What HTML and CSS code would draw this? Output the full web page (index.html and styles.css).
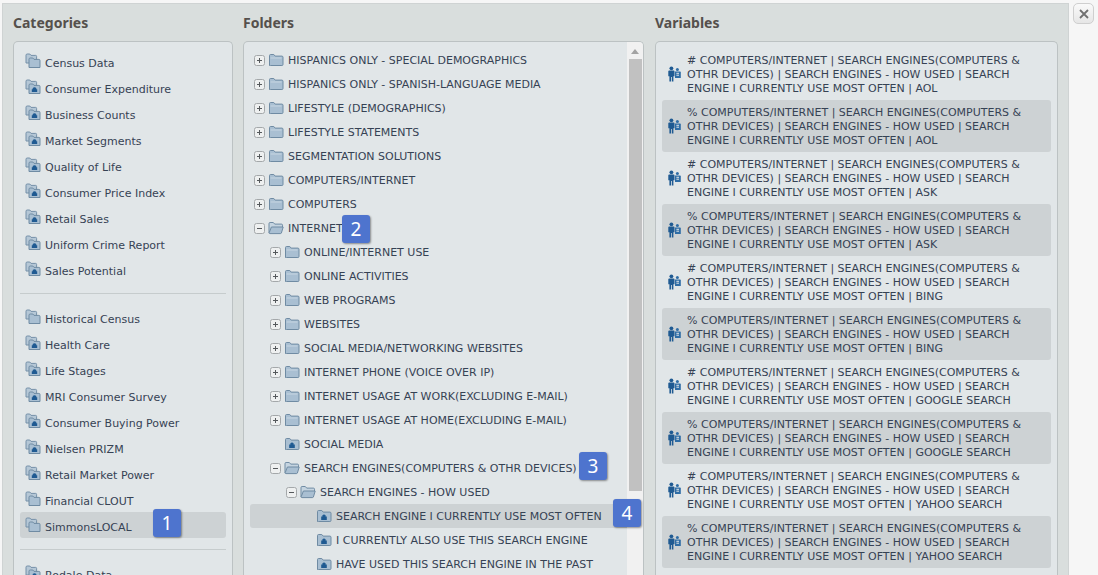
FILE: index.html
```html
<!DOCTYPE html>
<html lang="en">
<head>
<meta charset="utf-8">
<title>Data browser</title>
<link rel="stylesheet" href="styles.css">
</head>
<body>
<svg class="defs" width="0" height="0" aria-hidden="true">
  <defs>
    <symbol id="folder" viewBox="0 0 16 14"><path d="M1.5 12.5V2.6q0-1.1 1.1-1.1h3.2l1.4 1.6h6.7q1.1 0 1.1 1.1v7.3q0 1-1.1 1H2.6q-1.1 0-1.1-1z" fill="#a9bfd2" stroke="#6f8ba3"/><path d="M2.5 5h11" stroke="#c7d6e2"/></symbol>
    <symbol id="folder-open" viewBox="0 0 16 14"><path d="M1 12V2.6q0-1.1 1.1-1.1h3.2l1.4 1.6h6.7q1.1 0 1.1 1.1V6" fill="#c5d4e0" stroke="#6f8ba3"/><path d="M3.4 6h11.8l-1.8 6q-.2.6-1 .6H2q-1 0-.8-.9z" fill="#a9bfd2" stroke="#6f8ba3"/></symbol>
    <symbol id="folder-lock" viewBox="0 0 16 14"><path d="M1.5 12.5V2.6q0-1.1 1.1-1.1h3.2l1.4 1.6h6.7q1.1 0 1.1 1.1v7.3q0 1-1.1 1H2.6q-1.1 0-1.1-1z" fill="#a9bfd2" stroke="#6f8ba3"/><path d="M5.2 11V7.6h1.2V6.3q1.6-1.6 3.2 0v1.3h1.2V11z" fill="#1f5a92"/></symbol>
    <symbol id="stack" viewBox="0 0 16 16"><path d="M1 10V2.2Q1 1 2.2 1h2.6L6 2.4h4.6q1 0 1 1V10z" fill="#b5c7d6" stroke="#7590a8"/><path d="M4 14.5V6.2Q4 5 5.2 5h2.6L9 6.4h4.9q1.1 0 1.1 1.1v7H4z" fill="#a9bfd2" stroke="#6f8ba3"/></symbol>
    <symbol id="stack-lock" viewBox="0 0 16 16"><path d="M1 10V2.2Q1 1 2.2 1h2.6L6 2.4h4.6q1 0 1 1V10z" fill="#b5c7d6" stroke="#7590a8"/><path d="M4 14.5V6.2Q4 5 5.2 5h2.6L9 6.4h4.9q1.1 0 1.1 1.1v7H4z" fill="#a9bfd2" stroke="#6f8ba3"/><path d="M6.8 13v-2.8h.9V9q1.8-1.7 3.6 0v1.2h.9V13z" fill="#1f5a92"/></symbol>
    <symbol id="people" viewBox="0 0 13 16"><circle cx="3.4" cy="2.3" r="1.9" fill="#1f5a92"/><path d="M.3 5.3q0-.9.9-.9h4.4q.9 0 .9.9v5H5.4V15.5H3.8v-4.6h-.8v4.6H1.4V10.3H.3z" fill="#1f5a92"/><circle cx="9.4" cy="3.4" r="1.5" fill="#2f6da6"/><path d="M7 5.6h5q.8 0 .8.8V12H7z" fill="#2f6da6"/><path d="M8.4 7.3h2.6M8.4 9.2h2.6" stroke="#e0e5e8"/></symbol>
    <symbol id="plus" viewBox="0 0 11 11"><rect x=".5" y=".5" width="10" height="10" rx="2" fill="#eef0f0" stroke="#a4a8aa"/><path d="M3 5.5h5M5.5 3v5" stroke="#55595c"/></symbol>
    <symbol id="minus" viewBox="0 0 11 11"><rect x=".5" y=".5" width="10" height="10" rx="2" fill="#eef0f0" stroke="#a4a8aa"/><path d="M3 5.5h5" stroke="#55595c"/></symbol>
  </defs>
</svg>
<div class="stage">
  <main class="dialog">
    <section class="col col-cat">
      <h2>Categories</h2>
      <div class="panel cat-panel">
        <ul class="cats">
          <li><svg class="ic-stack"><use href="#stack"/></svg>Census Data</li>
          <li><svg class="ic-stack"><use href="#stack-lock"/></svg>Consumer Expenditure</li>
          <li><svg class="ic-stack"><use href="#stack-lock"/></svg>Business Counts</li>
          <li><svg class="ic-stack"><use href="#stack-lock"/></svg>Market Segments</li>
          <li><svg class="ic-stack"><use href="#stack-lock"/></svg>Quality of Life</li>
          <li><svg class="ic-stack"><use href="#stack-lock"/></svg>Consumer Price Index</li>
          <li><svg class="ic-stack"><use href="#stack-lock"/></svg>Retail Sales</li>
          <li><svg class="ic-stack"><use href="#stack-lock"/></svg>Uniform Crime Report</li>
          <li><svg class="ic-stack"><use href="#stack-lock"/></svg>Sales Potential</li>
        </ul>
        <hr>
        <ul class="cats">
          <li><svg class="ic-stack"><use href="#stack"/></svg>Historical Census</li>
          <li><svg class="ic-stack"><use href="#stack-lock"/></svg>Health Care</li>
          <li><svg class="ic-stack"><use href="#stack-lock"/></svg>Life Stages</li>
          <li><svg class="ic-stack"><use href="#stack-lock"/></svg>MRI Consumer Survey</li>
          <li><svg class="ic-stack"><use href="#stack-lock"/></svg>Consumer Buying Power</li>
          <li><svg class="ic-stack"><use href="#stack-lock"/></svg>Nielsen PRIZM</li>
          <li><svg class="ic-stack"><use href="#stack-lock"/></svg>Retail Market Power</li>
          <li><svg class="ic-stack"><use href="#stack"/></svg>Financial CLOUT</li>
          <li class="sel"><svg class="ic-stack"><use href="#stack"/></svg>SimmonsLOCAL<span class="badge badge-1">1</span></li>
        </ul>
        <hr>
        <ul class="cats">
          <li><svg class="ic-stack"><use href="#stack-lock"/></svg>Rodale Data</li>
        </ul>
      </div>
    </section>
    <section class="col col-fold">
      <h2>Folders</h2>
      <div class="panel fold-panel">
        <ul class="tree">
          <li><svg class="tog"><use href="#plus"/></svg><svg class="fo"><use href="#folder"/></svg>HISPANICS ONLY - SPECIAL DEMOGRAPHICS</li>
          <li><svg class="tog"><use href="#plus"/></svg><svg class="fo"><use href="#folder"/></svg>HISPANICS ONLY - SPANISH-LANGUAGE MEDIA</li>
          <li><svg class="tog"><use href="#plus"/></svg><svg class="fo"><use href="#folder"/></svg>LIFESTYLE (DEMOGRAPHICS)</li>
          <li><svg class="tog"><use href="#plus"/></svg><svg class="fo"><use href="#folder"/></svg>LIFESTYLE STATEMENTS</li>
          <li><svg class="tog"><use href="#plus"/></svg><svg class="fo"><use href="#folder"/></svg>SEGMENTATION SOLUTIONS</li>
          <li><svg class="tog"><use href="#plus"/></svg><svg class="fo"><use href="#folder"/></svg>COMPUTERS/INTERNET</li>
          <li><svg class="tog"><use href="#plus"/></svg><svg class="fo"><use href="#folder"/></svg>COMPUTERS</li>
          <li><svg class="tog"><use href="#minus"/></svg><svg class="fo"><use href="#folder-open"/></svg>INTERNET<span class="badge badge-2">2</span></li>
          <li class="l1"><svg class="tog"><use href="#plus"/></svg><svg class="fo"><use href="#folder"/></svg>ONLINE/INTERNET USE</li>
          <li class="l1"><svg class="tog"><use href="#plus"/></svg><svg class="fo"><use href="#folder"/></svg>ONLINE ACTIVITIES</li>
          <li class="l1"><svg class="tog"><use href="#plus"/></svg><svg class="fo"><use href="#folder"/></svg>WEB PROGRAMS</li>
          <li class="l1"><svg class="tog"><use href="#plus"/></svg><svg class="fo"><use href="#folder"/></svg>WEBSITES</li>
          <li class="l1"><svg class="tog"><use href="#plus"/></svg><svg class="fo"><use href="#folder"/></svg>SOCIAL MEDIA/NETWORKING WEBSITES</li>
          <li class="l1"><svg class="tog"><use href="#plus"/></svg><svg class="fo"><use href="#folder"/></svg>INTERNET PHONE (VOICE OVER IP)</li>
          <li class="l1"><svg class="tog"><use href="#plus"/></svg><svg class="fo"><use href="#folder"/></svg>INTERNET USAGE AT WORK(EXCLUDING E-MAIL)</li>
          <li class="l1"><svg class="tog"><use href="#plus"/></svg><svg class="fo"><use href="#folder"/></svg>INTERNET USAGE AT HOME(EXCLUDING E-MAIL)</li>
          <li class="l1 leaf"><svg class="fo"><use href="#folder-lock"/></svg>SOCIAL MEDIA</li>
          <li class="l1"><svg class="tog"><use href="#minus"/></svg><svg class="fo"><use href="#folder-open"/></svg>SEARCH ENGINES(COMPUTERS &amp; OTHR DEVICES)<span class="badge badge-3">3</span></li>
          <li class="l2"><svg class="tog"><use href="#minus"/></svg><svg class="fo"><use href="#folder-open"/></svg>SEARCH ENGINES - HOW USED</li>
          <li class="l3 leaf sel"><svg class="fo"><use href="#folder-lock"/></svg>SEARCH ENGINE I CURRENTLY USE MOST OFTEN<span class="badge badge-4">4</span></li>
          <li class="l3 leaf"><svg class="fo"><use href="#folder-lock"/></svg>I CURRENTLY ALSO USE THIS SEARCH ENGINE</li>
          <li class="l3 leaf"><svg class="fo"><use href="#folder-lock"/></svg>HAVE USED THIS SEARCH ENGINE IN THE PAST</li>
        </ul>
        <div class="scrollbar"><span class="arrow"></span><span class="thumb"></span></div>
      </div>
    </section>
    <section class="col col-var">
      <h2>Variables</h2>
      <div class="panel var-panel">
        <ul class="vars">
          <li><svg class="ic-people"><use href="#people"/></svg><p># COMPUTERS/INTERNET | SEARCH ENGINES(COMPUTERS &amp; OTHR DEVICES) | SEARCH ENGINES - HOW USED | SEARCH ENGINE I CURRENTLY USE MOST OFTEN | AOL</p></li>
          <li class="alt"><svg class="ic-people"><use href="#people"/></svg><p>% COMPUTERS/INTERNET | SEARCH ENGINES(COMPUTERS &amp; OTHR DEVICES) | SEARCH ENGINES - HOW USED | SEARCH ENGINE I CURRENTLY USE MOST OFTEN | AOL</p></li>
          <li><svg class="ic-people"><use href="#people"/></svg><p># COMPUTERS/INTERNET | SEARCH ENGINES(COMPUTERS &amp; OTHR DEVICES) | SEARCH ENGINES - HOW USED | SEARCH ENGINE I CURRENTLY USE MOST OFTEN | ASK</p></li>
          <li class="alt"><svg class="ic-people"><use href="#people"/></svg><p>% COMPUTERS/INTERNET | SEARCH ENGINES(COMPUTERS &amp; OTHR DEVICES) | SEARCH ENGINES - HOW USED | SEARCH ENGINE I CURRENTLY USE MOST OFTEN | ASK</p></li>
          <li><svg class="ic-people"><use href="#people"/></svg><p># COMPUTERS/INTERNET | SEARCH ENGINES(COMPUTERS &amp; OTHR DEVICES) | SEARCH ENGINES - HOW USED | SEARCH ENGINE I CURRENTLY USE MOST OFTEN | BING</p></li>
          <li class="alt"><svg class="ic-people"><use href="#people"/></svg><p>% COMPUTERS/INTERNET | SEARCH ENGINES(COMPUTERS &amp; OTHR DEVICES) | SEARCH ENGINES - HOW USED | SEARCH ENGINE I CURRENTLY USE MOST OFTEN | BING</p></li>
          <li><svg class="ic-people"><use href="#people"/></svg><p># COMPUTERS/INTERNET | SEARCH ENGINES(COMPUTERS &amp; OTHR DEVICES) | SEARCH ENGINES - HOW USED | SEARCH ENGINE I CURRENTLY USE MOST OFTEN | GOOGLE SEARCH</p></li>
          <li class="alt"><svg class="ic-people"><use href="#people"/></svg><p>% COMPUTERS/INTERNET | SEARCH ENGINES(COMPUTERS &amp; OTHR DEVICES) | SEARCH ENGINES - HOW USED | SEARCH ENGINE I CURRENTLY USE MOST OFTEN | GOOGLE SEARCH</p></li>
          <li><svg class="ic-people"><use href="#people"/></svg><p># COMPUTERS/INTERNET | SEARCH ENGINES(COMPUTERS &amp; OTHR DEVICES) | SEARCH ENGINES - HOW USED | SEARCH ENGINE I CURRENTLY USE MOST OFTEN | YAHOO SEARCH</p></li>
          <li class="alt"><svg class="ic-people"><use href="#people"/></svg><p>% COMPUTERS/INTERNET | SEARCH ENGINES(COMPUTERS &amp; OTHR DEVICES) | SEARCH ENGINES - HOW USED | SEARCH ENGINE I CURRENTLY USE MOST OFTEN | YAHOO SEARCH</p></li>
        </ul>
      </div>
    </section>
  </main>
  <button class="close" type="button" aria-label="Close">
    <svg width="12" height="12" viewBox="0 0 12 12"><path d="M2 2l8 8M10 2l-8 8" stroke="#707070" stroke-width="1.8"/></svg>
  </button>
</div>
</body>
</html>
```
FILE: styles.css
```css
* { box-sizing: border-box; }
html, body { margin: 0; height: 575px; overflow: hidden; }
body {
  background: #f6f6f6;
  font-family: "DejaVu Sans", "Liberation Sans", sans-serif;
  font-size: 11px;
  color: #364254;
}
.defs { position: absolute; }
ul { list-style: none; margin: 0; padding: 0; }
.stage { display: flex; align-items: flex-start; height: 575px; padding: 3px 0 0 2px; }
.dialog {
  width: 1067px;
  height: 572px;
  background: #d9dedd;
  border: 1px solid #cfd3d3;
  border-bottom: 0;
  display: flex;
  padding: 0 10px;
  gap: 10px;
  overflow: hidden;
}
.col { display: flex; flex-direction: column; flex: none; }
.col-cat { width: 220px; }
.col-fold { width: 401px; }
.col-var { width: 403px; margin-left: 1px; }
h2 {
  margin: 0;
  height: 37px;
  padding-top: 11px;
  font-family: "Noto Sans", "Liberation Sans", sans-serif;
  font-size: 14px;
  line-height: 16px;
  font-weight: 700;
  color: #55504c;
}
.panel {
  flex: 1;
  position: relative;
  background: #e1e6e8;
  border: 1px solid #bcc2c3;
  border-bottom: 0;
  border-radius: 5px 5px 0 0;
  overflow: hidden;
}
.cat-panel { padding: 6px 6px 0; }
.cats li {
  position: relative;
  display: flex;
  align-items: center;
  height: 26px;
  padding: 4px 0 0 5px;
  border-radius: 3px;
}
.cats li.sel { background: #cdd2d4; }
.ic-stack { width: 16px; height: 16px; margin-right: 4px; flex: none; position: relative; top: -2px; }
hr { border: 0; border-top: 1px solid #c6cccd; margin: 11px 0 10px; }
.tree { padding: 6px 0 0 6px; margin-right: 16px; }
.tree li { position: relative; display: flex; align-items: center; height: 24px; padding-left: 4px; white-space: nowrap; }
.tree li.l1 { padding-left: 20px; }
.tree li.l2 { padding-left: 36px; }
.tree li.l3 { padding-left: 52px; }
.tree li.l1.leaf { padding-left: 34px; }
.tree li.l3.leaf { padding-left: 66px; }
.tree li.sel { background: #cdd2d4; border-radius: 3px 0 0 3px; margin-right: -14px; }
.tog { width: 11px; height: 11px; margin-right: 3px; flex: none; }
.fo { width: 16px; height: 14px; margin-right: 4px; flex: none; }
.scrollbar {
  position: absolute;
  top: 0;
  right: 0;
  bottom: 0;
  width: 16px;
  background: #f1f1f1;
}
.arrow {
  position: absolute;
  top: 7px;
  left: 4px;
  border: 4px solid transparent;
  border-top: 0;
  border-bottom: 5px solid #a3a3a3;
}
.thumb { position: absolute; top: 17px; left: 2px; width: 13px; height: 432px; background: #c1c1c1; }
.var-panel { padding: 6px 6px 0; }
.vars li { display: flex; align-items: center; height: 52px; padding: 1px 4px 0 6px; border-radius: 3px; }
.vars li.alt { background: #cdd2d4; }
.ic-people { width: 13px; height: 16px; flex: none; margin-right: 6px; position: relative; top: -1px; }
.vars p { margin: 0; line-height: 14px; }
.badge {
  position: absolute;
  z-index: 2;
  width: 28px;
  height: 28px;
  display: flex;
  align-items: center;
  justify-content: center;
  background: #4e74ce;
  color: #fff;
  font-family: "Noto Sans", sans-serif;
  font-size: 19px;
  border-radius: 3px;
  box-shadow: 1px 1px 2px rgba(0,0,0,.4);
}
.badge-1 { left: 133px; top: -3px; }
.badge-2 { left: 92px; top: -1px; }
.badge-3 { left: 329px; top: -4px; }
.badge-4 { left: 363px; top: -5px; }
.close {
  width: 21px;
  height: 21px;
  margin-left: 4px;
  padding: 0;
  background: linear-gradient(#fafafa, #e6e6e6);
  border: 1px solid #cfcfcf;
  border-radius: 5px;
  display: flex;
  align-items: center;
  justify-content: center;
}
```
